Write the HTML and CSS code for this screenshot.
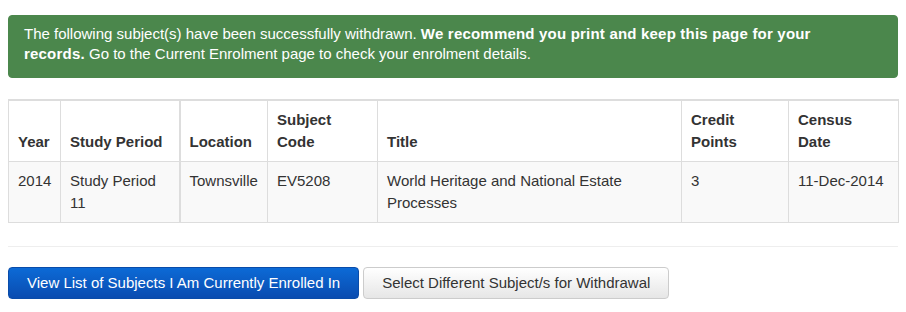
FILE: index.html
```html
<!DOCTYPE html>
<html>
<head>
<meta charset="utf-8">
<link rel="stylesheet" href="styles.css">
</head>
<body>
<div class="alert">The following subject(s) have been successfully withdrawn. <strong>We recommend you print and keep this page for your<br>records.</strong> Go to the Current Enrolment page to check your enrolment details.</div>
<table class="subjects">
  <colgroup>
    <col class="c-year"><col class="c-period"><col class="c-loc"><col class="c-code"><col class="c-title"><col class="c-credit"><col class="c-census">
  </colgroup>
  <thead>
    <tr>
      <th>Year</th>
      <th>Study Period</th>
      <th class="thick">Location</th>
      <th>Subject Code</th>
      <th>Title</th>
      <th>Credit Points</th>
      <th>Census Date</th>
    </tr>
  </thead>
  <tbody>
    <tr>
      <td>2014</td>
      <td>Study Period 11</td>
      <td class="thick">Townsville</td>
      <td>EV5208</td>
      <td>World Heritage and National Estate Processes</td>
      <td>3</td>
      <td>11-Dec-2014</td>
    </tr>
  </tbody>
</table>
<hr class="divider">
<div class="actions">
  <button class="btn btn-primary">View List of Subjects I Am Currently Enrolled In</button>
  <button class="btn btn-default">Select Different Subject/s for Withdrawal</button>
</div>
</body>
</html>
```
FILE: styles.css
```css
html, body {
  margin: 0;
  padding: 0;
  background: #fff;
}
body {
  padding: 15px 8px 0 8px;
  font-family: "Liberation Sans", Arial, sans-serif;
  font-size: 15px;
  color: #333;
}
.alert {
  background: #4b874c;
  border: 1px solid #4b874c;
  border-radius: 4px;
  color: #fff;
  line-height: 20px;
  padding: 8px 35px 13px 15px;
}
.alert strong {
  font-weight: bold;
  letter-spacing: 0.2px;
}
.subjects {
  margin-top: 21px;
  width: 890px;
  table-layout: fixed;
  border-collapse: collapse;
  border: 1px solid #ddd;
  border-top: 2px solid #ddd;
  line-height: 22px;
}
.c-year { width: 52px; }
.c-period { width: 119px; }
.c-loc { width: 88px; }
.c-code { width: 110px; }
.c-title { width: 304px; }
.c-credit { width: 107px; }
.c-census { width: 110px; }
.subjects th,
.subjects td {
  border: 1px solid #ddd;
  padding: 8px 9px;
  text-align: left;
}
.subjects th {
  font-weight: bold;
  vertical-align: bottom;
  background: #fff;
  padding-right: 12px;
}
.subjects td {
  vertical-align: top;
  background: #f9f9f9;
}
.subjects .thick {
  border-left: 2px solid #ddd;
}
.divider {
  border: 0;
  border-top: 1px solid #eee;
  margin: 23px 0 20px 0;
}
.actions {
  display: flex;
  gap: 4px;
}
.btn {
  font-family: "Liberation Sans", Arial, sans-serif;
  font-size: 15px;
  line-height: 20px;
  height: 32px;
  padding: 5px 18px;
  border-radius: 4px;
  cursor: pointer;
}
.btn-primary {
  color: #fff;
  background: linear-gradient(to bottom, #0c6ad6 0%, #0a4cb0 100%);
  border: 1px solid #0a4ca9;
}
.btn-default {
  color: #333;
  background: linear-gradient(to bottom, #ffffff 0%, #e6e6e6 100%);
  border: 1px solid #ccc;
}
```
